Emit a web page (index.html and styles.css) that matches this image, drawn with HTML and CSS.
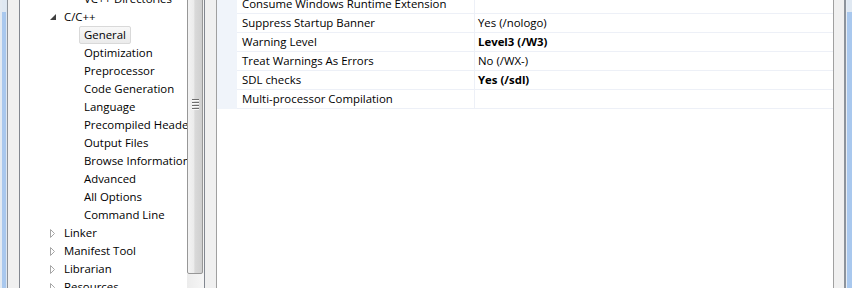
FILE: index.html
```html
<!DOCTYPE html>
<html>
<head>
<meta charset="utf-8">
<link rel="stylesheet" href="styles.css">
</head>
<body>
<div class="window">
  <div class="frame-left"><div class="fl-a"></div><div class="fl-blue"></div><div class="fl-b"></div><div class="fl-c"></div></div>
  <div class="dialog">
    <div class="tree">
      <ul class="tree-list">
        <li class="row l3"><span class="label">VC++ Directories</span></li>
        <li class="row l2"><span class="arrow"><svg width="6" height="6" viewBox="0 0 6 6"><polygon points="6,0 6,6 0,6" fill="#404040"/></svg></span><span class="label">C/C++</span></li>
        <li class="row l3"><span class="label selected">General</span></li>
        <li class="row l3"><span class="label">Optimization</span></li>
        <li class="row l3"><span class="label">Preprocessor</span></li>
        <li class="row l3"><span class="label">Code Generation</span></li>
        <li class="row l3"><span class="label">Language</span></li>
        <li class="row l3"><span class="label">Precompiled Headers</span></li>
        <li class="row l3"><span class="label">Output Files</span></li>
        <li class="row l3"><span class="label">Browse Information</span></li>
        <li class="row l3"><span class="label">Advanced</span></li>
        <li class="row l3"><span class="label">All Options</span></li>
        <li class="row l3"><span class="label">Command Line</span></li>
        <li class="row l2"><span class="arrow"><svg width="6" height="9" viewBox="0 0 6 9"><polygon points="0.5,0.5 4.5,4.5 0.5,8.5" fill="#fff" stroke="#a6a6a6"/></svg></span><span class="label">Linker</span></li>
        <li class="row l2"><span class="arrow"><svg width="6" height="9" viewBox="0 0 6 9"><polygon points="0.5,0.5 4.5,4.5 0.5,8.5" fill="#fff" stroke="#a6a6a6"/></svg></span><span class="label">Manifest Tool</span></li>
        <li class="row l2"><span class="arrow"><svg width="6" height="9" viewBox="0 0 6 9"><polygon points="0.5,0.5 4.5,4.5 0.5,8.5" fill="#fff" stroke="#a6a6a6"/></svg></span><span class="label">Librarian</span></li>
        <li class="row l2"><span class="arrow"><svg width="6" height="9" viewBox="0 0 6 9"><polygon points="0.5,0.5 4.5,4.5 0.5,8.5" fill="#fff" stroke="#a6a6a6"/></svg></span><span class="label">Resources</span></li>
      </ul>
      <div class="vscroll">
        <div class="thumb"><div class="grip"><i></i><i></i><i></i><i></i></div></div>
        <div class="track"></div>
      </div>
    </div>
    <div class="grid">
      <div class="prop"><div class="margin"></div><div class="name">Consume Windows Runtime Extension</div><div class="value"></div></div>
      <div class="prop"><div class="margin"></div><div class="name">Suppress Startup Banner</div><div class="value">Yes (/nologo)</div></div>
      <div class="prop"><div class="margin"></div><div class="name">Warning Level</div><div class="value bold">Level3 (/W3)</div></div>
      <div class="prop"><div class="margin"></div><div class="name">Treat Warnings As Errors</div><div class="value">No (/WX-)</div></div>
      <div class="prop"><div class="margin"></div><div class="name">SDL checks</div><div class="value bold">Yes (/sdl)</div></div>
      <div class="prop"><div class="margin"></div><div class="name">Multi-processor Compilation</div><div class="value"></div></div>
    </div>
    <div class="right-pad"></div>
  </div>
  <div class="frame-right"><div class="fr-a"></div><div class="fr-b"></div><div class="fr-blue"></div><div class="fr-c"></div></div>
</div>
</body>
</html>
```
FILE: styles.css
```css
html, body {
  margin: 0;
  padding: 0;
}
body {
  width: 852px;
  height: 288px;
  overflow: hidden;
  background: #f0f0f0;
  font-family: "Open Sans", "Noto Sans", sans-serif;
  font-size: 11.4px;
  color: #000;
}
.window {
  display: flex;
  height: 288px;
}
.frame-left, .frame-right {
  display: flex;
  height: 288px;
}
.fl-a { width: 2px; background: #e3eaf2; }
.fl-blue, .fr-blue {
  width: 4px;
  background: linear-gradient(#dfe8f2 0, #dfe8f2 12px, #a9c8ee 12px, #a9c8ee 100%);
}
.fr-blue { width: 5px; }
.fl-b { width: 1px; background: #dde6f0; }
.fl-c { width: 1px; background: #8d939b; }
.fr-a { width: 1px; background: #8d939b; }
.fr-b { width: 1px; background: #e7edf4; }
.fr-c { width: 1px; background: #2b3138; }

.dialog {
  flex: 1;
  display: flex;
  padding-left: 11px;
  background: #f0f0f0;
}
.tree {
  width: 184px;
  display: flex;
  background: #fff;
  border-left: 1px solid #828790;
  border-right: 1px solid #828790;
  overflow: hidden;
}
.tree-list {
  list-style: none;
  margin: -10px 0 0 0;
  padding: 0;
  width: 167px;
  overflow: hidden;
  white-space: nowrap;
}
.row {
  display: flex;
  align-items: center;
  height: 18px;
}
.row.l2 { padding-left: 30px; }
.row.l3 { padding-left: 59px; }
.arrow {
  width: 9px;
  display: flex;
  align-items: center;
}
.arrow svg { display: block; }
.label {
  display: block;
  height: 16px;
  line-height: 16px;
  padding: 0 4px;
  border: 1px solid transparent;
  border-radius: 2px;
}
.label.selected {
  background: linear-gradient(#f8f8f8, #ebebeb);
  border-color: #d9d9d9;
}
.vscroll {
  width: 17px;
  display: flex;
  flex-direction: column;
  background: #f3f3f3;
}
.thumb {
  margin-top: -66px;
  height: 340px;
  width: 16px;
  box-sizing: border-box;
  border: 1px solid #979797;
  border-radius: 2px;
  background: linear-gradient(to right, #f3f3f3 0, #ececec 40%, #d9d9d9 50%, #cfcfcf 100%);
  display: flex;
  align-items: center;
  justify-content: center;
}
.grip {
  display: flex;
  flex-direction: column;
  gap: 1px;
}
.grip i {
  display: block;
  width: 7px;
  height: 1px;
  background: #6e6e6e;
  border-bottom: 1px solid #fafafa;
}
.track {
  flex: 1;
  background: linear-gradient(to right, #ececec, #f6f6f6);
}

.grid {
  margin-left: 11px;
  width: 616px;
  background: #fff;
  border-left: 1px solid #a0a0a0;
  border-right: 1px solid #a0a0a0;
  overflow: hidden;
}
.grid .prop:first-child { margin-top: -5px; }
.prop {
  display: flex;
  height: 19px;
}
.margin {
  width: 20px;
  background: #f0f4fa;
}
.name {
  width: 232px;
  padding-left: 5px;
  border-right: 1px solid #edf0f7;
  border-bottom: 1px solid #edf0f7;
  line-height: 18px;
  white-space: nowrap;
}
.value {
  flex: 1;
  padding-left: 3px;
  border-bottom: 1px solid #edf0f7;
  line-height: 18px;
  white-space: nowrap;
}
.value.bold { font-weight: bold; }
.right-pad {
  width: 10px;
  border-right: 1px solid #8d939b;
}
```
